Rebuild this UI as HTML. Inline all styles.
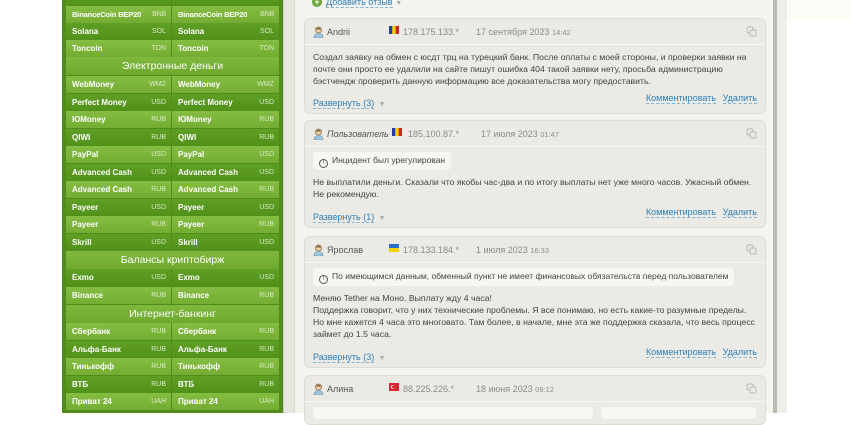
<!DOCTYPE html>
<html><head><meta charset="utf-8">
<style>
*{margin:0;padding:0;box-sizing:border-box}
body{width:850px;height:413px;overflow:hidden;background:#fff;position:relative;font-family:"Liberation Sans","DejaVu Sans",sans-serif}
.topcream{position:absolute;left:787px;top:0;width:63px;height:20px;background:#fcfcf7}
.gp{position:absolute;left:62px;top:0;width:221px;height:413px;background:#4f8c1a}
.r{position:absolute;height:17px;font-size:8px;color:#fff;font-weight:bold;line-height:17px;padding:0 6px;white-space:nowrap}
.r b{position:absolute;right:5px;top:0;font-size:7px;color:#d8ebc4;font-weight:normal}
.l{background:linear-gradient(#86bd44,#74ad33)}
.d{background:linear-gradient(#5f9f24,#51911a)}
.h{position:absolute;left:66px;width:213px;height:18px;background:linear-gradient(#7fb83d,#6ea92e);color:#fff;font-size:10.5px;text-align:center;line-height:18px}
.gb{position:absolute;left:283px;top:0;width:12px;height:413px;background:#e6e5de;border-left:1px solid #cfcec6;border-right:1px solid #d8d7d0}
.main{position:absolute;left:295px;top:0;width:478px;height:413px;background:#f4f4ef}
.vl{position:absolute;left:773px;top:0;width:4px;height:413px;background:#bdbcb4}
.vl2{position:absolute;left:777px;top:0;width:10px;height:413px;background:#eeeee8}
.card{position:absolute;left:304px;width:462px;background:#ebeae4;border:1px solid #dddcd5;border-radius:6px;overflow:hidden}
.hd{height:26px;border-bottom:1px solid #f8f8f4;position:relative;font-size:9px;color:#888;white-space:nowrap}
.hd .u{position:absolute;left:8px;top:7px;width:11px;height:12px}
.hd .n{position:absolute;left:22px;top:8px;color:#555}
.hd .f{position:absolute;left:84px;top:7px;width:10px;height:8px}
.hd .ip{position:absolute;left:98px;top:8px;color:#8a8a8a}
.hd .dt{position:absolute;left:171px;top:8px;color:#8a8a8a}
.hd .dt small{font-size:7.5px}
.hd .cp{position:absolute;right:8px;top:7px;width:11px;height:11px}
.bd{padding:6px 8px;font-size:8.7px;color:#444;line-height:12px}
.nt{display:inline-block;background:#f7f6f1;border-radius:4px;padding:2px 6px;font-size:8.5px;white-space:nowrap;line-height:12px}
.nt i{display:inline-block;width:9px;height:9px;border:1px solid #555;border-radius:50%;font-size:6px;text-align:center;line-height:7px;font-style:normal;margin-right:4px;vertical-align:-1px}
.lk{color:#2f7fb8;border-bottom:1px dashed #7fb4d8;font-size:9px}
.ft{position:absolute;left:8px;right:0;bottom:6px;height:14px}
.ft .a{position:absolute;right:8px;top:0}
.ft .b{position:absolute;right:49px;top:0}
.ft .e{position:absolute;left:0;top:0}
.ar{color:#aaa;font-size:7px}
</style></head><body>
<div class="topcream"></div>
<div class="gp"></div>
<div id="rows"></div>
<div class="gb"></div>
<div class="main"></div>
<div class="vl"></div><div class="vl2"></div>

<div style="position:absolute;left:312px;top:-3px;font-size:9.5px;color:#2f7fb8"><span style="display:inline-block;width:10px;height:10px;border-radius:50%;background:#6aa83a;color:#fff;font-size:9px;line-height:10px;text-align:center;font-weight:bold;margin-right:4px">+</span><span class="lk">Добавить отзыв</span> <span class="ar">▼</span></div>

<svg width="0" height="0" style="position:absolute"><defs>
<symbol id="usr" viewBox="0 0 11 12"><circle cx="5.5" cy="4" r="3" fill="#f2d3a8" stroke="#8a6a40" stroke-width=".8"/><path d="M2.5 3.5 Q5.5 0 8.5 3.5" fill="#7a5a30"/><path d="M1 12 Q1 7.5 5.5 7.5 Q10 7.5 10 12Z" fill="#9ec4e0" stroke="#6a8aa0" stroke-width=".6"/></symbol>
<symbol id="cpy" viewBox="0 0 11 11"><rect x="1" y="1" width="6" height="6" rx="1.5" fill="none" stroke="#bbb"/><rect x="4" y="4" width="6" height="6" rx="1.5" fill="#ebeae4" stroke="#bbb"/></symbol>
</defs></svg>

<div class="card" style="top:18px;height:96px">
 <div class="hd"><svg class="u"><use href="#usr"/></svg><span class="n">Andrii</span>
 <svg class="f" viewBox="0 0 10 8"><rect width="3.4" height="8" fill="#1f3d9a"/><rect x="3.3" width="3.4" height="8" fill="#f5d000"/><rect x="6.6" width="3.4" height="8" fill="#d0202a"/></svg>
 <span class="ip">178.175.133.*</span><span class="dt">17 сентября 2023 <small>14:42</small></span><svg class="cp"><use href="#cpy"/></svg></div>
 <div class="bd">Создал заявку на обмен с юсдт трц на турецкий банк. После оплаты с моей стороны, и проверки заявки на<br>почте они просто ее удалили на сайте пишут ошибка 404 такой заявки нету, просьба администрацию<br>бэстчендж проверить данную информацию все доказательства могу предоставить.</div>
 <div class="ft"><span class="e"><span class="lk">Развернуть (3)</span> <span class="ar">▼</span></span><span class="lk b">Комментировать</span><span class="lk a">Удалить</span></div>
</div>

<div class="card" style="top:120px;height:108px">
 <div class="hd"><svg class="u"><use href="#usr"/></svg><span class="n" style="font-style:italic">Пользователь</span>
 <svg class="f" viewBox="0 0 10 8" style="left:87px"><rect width="3.4" height="8" fill="#1f3d9a"/><rect x="3.3" width="3.4" height="8" fill="#f5d000"/><rect x="6.6" width="3.4" height="8" fill="#d0202a"/></svg>
 <span class="ip" style="left:103px">185.100.87.*</span><span class="dt" style="left:176px">17 июля 2023 <small>01:47</small></span><svg class="cp"><use href="#cpy"/></svg></div>
 <div class="bd" style="padding-top:5px"><div class="nt"><i>!</i>Инцидент был урегулирован</div><div style="height:6px"></div>Не выплатили деньги. Сказали что якобы час-два и по итогу выплаты нет уже много часов. Ужасный обмен.<br>Не рекомендую.</div>
 <div class="ft"><span class="e"><span class="lk">Развернуть (1)</span> <span class="ar">▼</span></span><span class="lk b">Комментировать</span><span class="lk a">Удалить</span></div>
</div>

<div class="card" style="top:236px;height:132px">
 <div class="hd"><svg class="u"><use href="#usr"/></svg><span class="n">Ярослав</span>
 <svg class="f" viewBox="0 0 10 8"><rect width="10" height="4" fill="#2a6fd0"/><rect y="4" width="10" height="4" fill="#f5d000"/></svg>
 <span class="ip">178.133.184.*</span><span class="dt">1 июля 2023 <small>16:33</small></span><svg class="cp"><use href="#cpy"/></svg></div>
 <div class="bd" style="padding-top:5px"><div class="nt"><i>!</i>По имеющимся данным, обменный пункт не имеет финансовых обязательств перед пользователем</div><div style="height:6px"></div>Меняю Tether на Моно. Выплату жду 4 часа!<br>Поддержка говорит, что у них технические проблемы. Я все понимаю, но есть какие-то разумные пределы.<br>Но мне кажется 4 часа это многовато. Там более, в начале, мне эта же поддержка сказала, что весь процесс<br>займет до 1.5 часа.</div>
 <div class="ft"><span class="e"><span class="lk">Развернуть (3)</span> <span class="ar">▼</span></span><span class="lk b">Комментировать</span><span class="lk a">Удалить</span></div>
</div>

<div class="card" style="top:375px;height:50px">
 <div class="hd"><svg class="u"><use href="#usr"/></svg><span class="n">Алина</span>
 <svg class="f" viewBox="0 0 10 8"><rect width="10" height="8" fill="#d8282e"/><circle cx="4" cy="4" r="2" fill="#fff"/><circle cx="4.6" cy="4" r="1.6" fill="#d8282e"/></svg>
 <span class="ip">88.225.226.*</span><span class="dt">18 июня 2023 <small>08:12</small></span><svg class="cp"><use href="#cpy"/></svg></div>
 <div style="position:absolute;left:8px;top:31px;width:280px;height:12px;background:#f7f6f1;border-radius:4px"></div>
 <div style="position:absolute;left:296px;top:31px;width:155px;height:12px;background:#f7f6f1;border-radius:4px"></div>
</div>

<script>
var data=[
[6,'l','BinanceCoin BEP20','BNB'],[23,'d','Solana','SOL'],[40,'l','Toncoin','TON'],
[57,'h','Электронные деньги'],
[76,'l','WebMoney','WMZ'],[94,'d','Perfect Money','USD'],[111,'l','ЮMoney','RUB'],[129,'d','QIWI','RUB'],
[146,'l','PayPal','USD'],[164,'d','Advanced Cash','USD'],[181,'l','Advanced Cash','RUB'],[199,'d','Payeer','USD'],
[216,'l','Payeer','RUB'],[234,'d','Skrill','USD'],
[251,'h','Балансы криптобирж'],
[269,'d','Exmo','USD'],[287,'l','Binance','RUB'],
[305,'h','Интернет-банкинг'],
[323,'l','Сбербанк','RUB'],[341,'d','Альфа-Банк','RUB'],[358,'l','Тинькофф','RUB'],[376,'d','ВТБ','RUB'],[393,'l','Приват 24','UAH']];
var h='';
data.forEach(function(d){
 if(d[1]=='h'){h+='<div class="h" style="top:'+d[0]+'px">'+d[2]+'</div>';}
 else{
  var s=d[2].length>14?'font-size:7.6px;letter-spacing:-0.2px':'';
  h+='<div class="r '+d[1]+'" style="left:66px;width:105px;top:'+d[0]+'px;'+s+'">'+d[2]+'<b>'+d[3]+'</b></div>';
  h+='<div class="r '+d[1]+'" style="left:172px;width:107px;top:'+d[0]+'px;'+s+'">'+d[2]+'<b>'+d[3]+'</b></div>';
 }
});
h='<div class="r d" style="left:66px;width:105px;top:-11px"></div><div class="r d" style="left:172px;width:107px;top:-11px"></div>'+h;
document.getElementById('rows').innerHTML=h;
</script>
</body></html>
